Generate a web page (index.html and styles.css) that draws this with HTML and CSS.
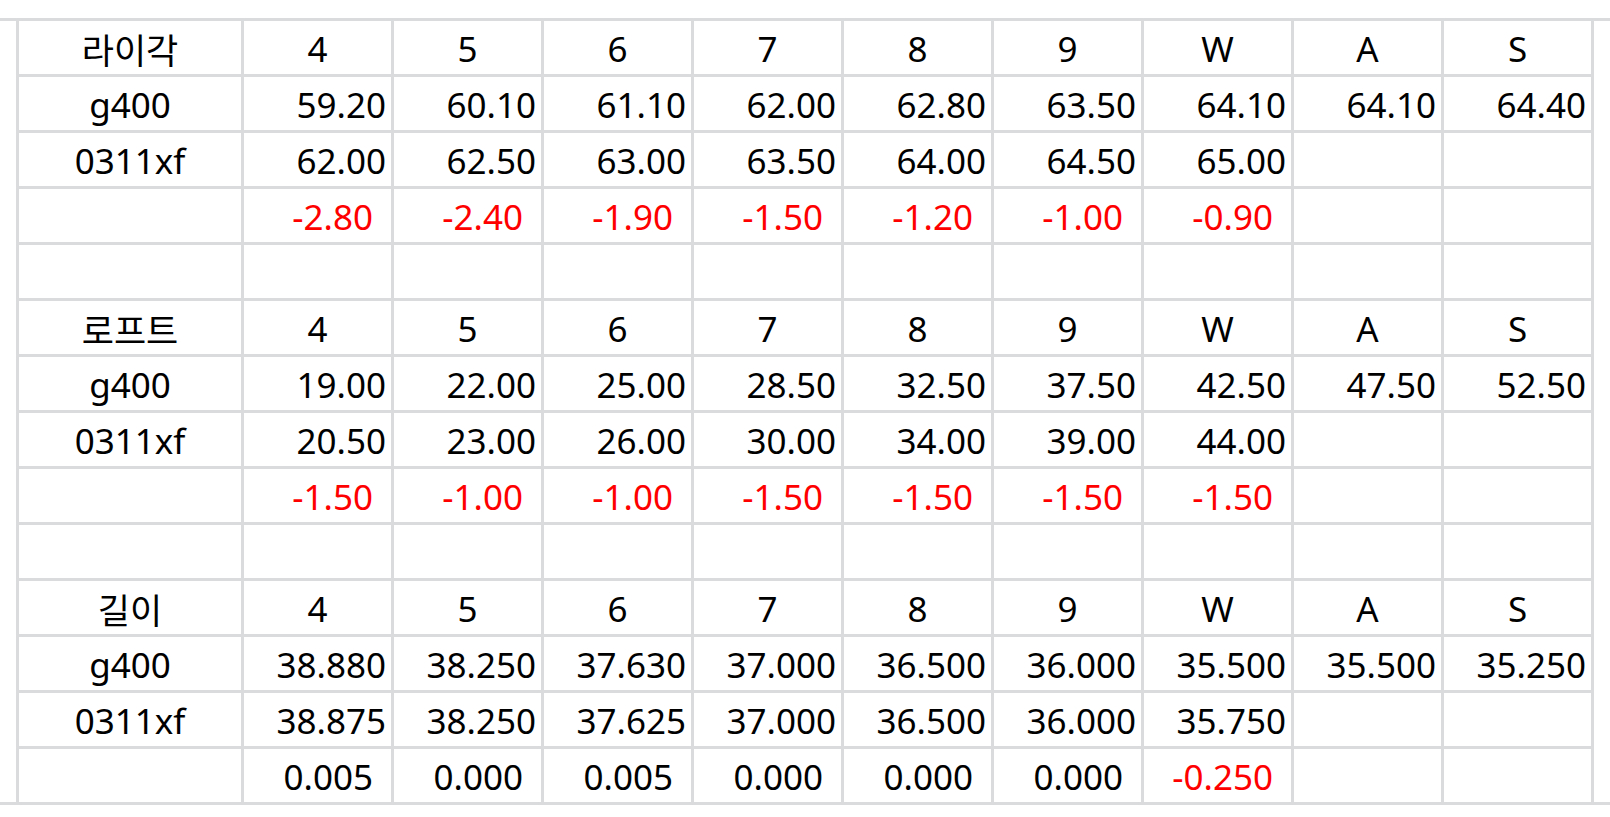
FILE: index.html
```html
<!DOCTYPE html>
<html lang="ko">
<head>
<meta charset="utf-8">
<title>Sheet</title>
<link rel="stylesheet" href="styles.css">
</head>
<body>
<div class="sheet">
  <div class="grid">
    <div class="cell ctr ko">라이각</div><div class="cell ctr">4</div><div class="cell ctr">5</div><div class="cell ctr">6</div><div class="cell ctr">7</div><div class="cell ctr">8</div><div class="cell ctr">9</div><div class="cell ctr">W</div><div class="cell ctr">A</div><div class="cell ctr">S</div>
    <div class="cell ctr">g400</div><div class="cell">59.20</div><div class="cell">60.10</div><div class="cell">61.10</div><div class="cell">62.00</div><div class="cell">62.80</div><div class="cell">63.50</div><div class="cell">64.10</div><div class="cell">64.10</div><div class="cell">64.40</div>
    <div class="cell ctr">0311xf</div><div class="cell">62.00</div><div class="cell">62.50</div><div class="cell">63.00</div><div class="cell">63.50</div><div class="cell">64.00</div><div class="cell">64.50</div><div class="cell">65.00</div><div class="cell"></div><div class="cell"></div>
    <div class="cell"></div><div class="cell diff neg">-2.80</div><div class="cell diff neg">-2.40</div><div class="cell diff neg">-1.90</div><div class="cell diff neg">-1.50</div><div class="cell diff neg">-1.20</div><div class="cell diff neg">-1.00</div><div class="cell diff neg">-0.90</div><div class="cell"></div><div class="cell"></div>
    <div class="cell"></div><div class="cell"></div><div class="cell"></div><div class="cell"></div><div class="cell"></div><div class="cell"></div><div class="cell"></div><div class="cell"></div><div class="cell"></div><div class="cell"></div>
    <div class="cell ctr ko">로프트</div><div class="cell ctr">4</div><div class="cell ctr">5</div><div class="cell ctr">6</div><div class="cell ctr">7</div><div class="cell ctr">8</div><div class="cell ctr">9</div><div class="cell ctr">W</div><div class="cell ctr">A</div><div class="cell ctr">S</div>
    <div class="cell ctr">g400</div><div class="cell">19.00</div><div class="cell">22.00</div><div class="cell">25.00</div><div class="cell">28.50</div><div class="cell">32.50</div><div class="cell">37.50</div><div class="cell">42.50</div><div class="cell">47.50</div><div class="cell">52.50</div>
    <div class="cell ctr">0311xf</div><div class="cell">20.50</div><div class="cell">23.00</div><div class="cell">26.00</div><div class="cell">30.00</div><div class="cell">34.00</div><div class="cell">39.00</div><div class="cell">44.00</div><div class="cell"></div><div class="cell"></div>
    <div class="cell"></div><div class="cell diff neg">-1.50</div><div class="cell diff neg">-1.00</div><div class="cell diff neg">-1.00</div><div class="cell diff neg">-1.50</div><div class="cell diff neg">-1.50</div><div class="cell diff neg">-1.50</div><div class="cell diff neg">-1.50</div><div class="cell"></div><div class="cell"></div>
    <div class="cell"></div><div class="cell"></div><div class="cell"></div><div class="cell"></div><div class="cell"></div><div class="cell"></div><div class="cell"></div><div class="cell"></div><div class="cell"></div><div class="cell"></div>
    <div class="cell ctr ko">길이</div><div class="cell ctr">4</div><div class="cell ctr">5</div><div class="cell ctr">6</div><div class="cell ctr">7</div><div class="cell ctr">8</div><div class="cell ctr">9</div><div class="cell ctr">W</div><div class="cell ctr">A</div><div class="cell ctr">S</div>
    <div class="cell ctr">g400</div><div class="cell">38.880</div><div class="cell">38.250</div><div class="cell">37.630</div><div class="cell">37.000</div><div class="cell">36.500</div><div class="cell">36.000</div><div class="cell">35.500</div><div class="cell">35.500</div><div class="cell">35.250</div>
    <div class="cell ctr">0311xf</div><div class="cell">38.875</div><div class="cell">38.250</div><div class="cell">37.625</div><div class="cell">37.000</div><div class="cell">36.500</div><div class="cell">36.000</div><div class="cell">35.750</div><div class="cell"></div><div class="cell"></div>
    <div class="cell"></div><div class="cell diff">0.005</div><div class="cell diff">0.000</div><div class="cell diff">0.005</div><div class="cell diff">0.000</div><div class="cell diff">0.000</div><div class="cell diff">0.000</div><div class="cell diff neg">-0.250</div><div class="cell"></div><div class="cell"></div>
  </div>
</div>
</body>
</html>
```

FILE: styles.css
```css
html, body {
  margin: 0;
  padding: 0;
  background: #ffffff;
}

.sheet {
  margin-top: 18px;
  border-top: 3px solid #dadbdd;
  border-bottom: 3px solid #dadbdd;
}

.grid {
  display: grid;
  grid-template-columns: 222px repeat(9, 147px);
  grid-auto-rows: 53px;
  gap: 3px;
  width: max-content;
  margin-left: 16px;
  background: #dadbdd;
  border-left: 3px solid #dadbdd;
  border-right: 3px solid #dadbdd;
}

.cell {
  background: #ffffff;
  display: flex;
  align-items: flex-end;
  justify-content: flex-end;
  padding: 0 5px 5px 0;
  font-family: "Noto Sans", "Noto Sans CJK KR", sans-serif;
  font-size: 35px;
  line-height: 40px;
  color: #000000;
  white-space: nowrap;
  overflow: hidden;
}

.ctr {
  justify-content: center;
  padding-right: 0;
}

.ko {
  font-family: "Noto Sans CJK KR", "Noto Sans", sans-serif;
}

.diff {
  padding-right: 18px;
}

.neg {
  color: #ff0000;
}
```
